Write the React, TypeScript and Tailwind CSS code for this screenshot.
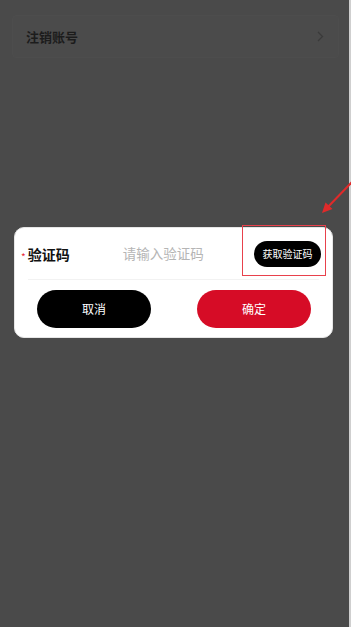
export default function App() {
  const font = { fontFamily: '"Noto Sans CJK SC", "Noto Sans", sans-serif' };
  return (
    <div style={font} className="relative h-[627px] w-[351px] overflow-hidden bg-[#4a4a4a]">
      <div className="absolute inset-y-0 right-0 w-[2px] bg-[#cfcfcf]" />

      {/* 背景列表 */}
      <div className="mx-[12px] mt-[15px] flex h-[43px] items-center justify-between rounded-[4px] border border-[#4d4d4d] bg-[#4b4b4b] pl-[13px] pr-[14px]">
        <span className="text-[13px] font-bold leading-none text-[#1c1c1c]">注销账号</span>
        <svg width="7" height="11" viewBox="0 0 7 11" fill="none">
          <path d="M1 1l4.5 4.5L1 10" stroke="#3a3a3a" strokeWidth="1.3" />
        </svg>
      </div>

      {/* 弹窗 */}
      <div className="mx-[14px] mt-[169px] w-[319px] rounded-[10px] border border-[#e6e6e6] bg-white pb-[9px]">
        <div className="flex h-[51px] items-center pl-[6px] pr-[11px]">
          <span className="mr-[2px] mt-[6px] text-[10px] leading-none text-[#e8273a]">*</span>
          <span className="text-[14px] font-bold leading-none text-[#111]">验证码</span>
          <span className="ml-[53px] text-[13.5px] leading-none text-[#b5b5b5]">请输入验证码</span>
          <button className="ml-auto flex h-[26px] w-[67px] items-center justify-center rounded-full bg-black text-[10px] leading-none text-white">
            获取验证码
          </button>
        </div>
        <div className="mx-[13px] h-px bg-[#f2f2f2]" />
        <div className="mt-[10px] flex justify-between pl-[22px] pr-[21px]">
          <button className="flex h-[38px] w-[114px] items-center justify-center rounded-full bg-black text-[12px] text-white">
            取消
          </button>
          <button className="flex h-[38px] w-[114px] items-center justify-center rounded-full bg-[#d60c26] text-[12px] text-white">
            确定
          </button>
        </div>
      </div>

      {/* 标注 */}
      <div className="absolute left-[242px] top-[225px] h-[51px] w-[84px] border border-[#e8414c]" />
      <svg className="absolute left-[316px] top-[176px]" width="36" height="42" viewBox="0 0 36 42" fill="none">
        <path d="M36 6L10 33" stroke="#e02a2a" strokeWidth="2" />
        <path d="M6 37l3.5-10.5 7 6.5z" fill="#e02a2a" />
      </svg>
    </div>
  );
}
